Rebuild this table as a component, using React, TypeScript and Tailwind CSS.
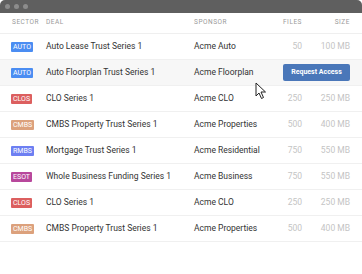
import React from "react";

type Deal = {
  sector: string;
  deal: string;
  sponsor: string;
  files: number;
  size: string;
};

const SECTOR_COLORS: Record<string, string> = {
  AUTO: "bg-[#4b8df2]",
  CLOS: "bg-[#dc5f5f]",
  CMBS: "bg-[#dca17c]",
  RMBS: "bg-[#6d7ff2]",
  ESOT: "bg-[#b8489c]",
};

const DEALS: Deal[] = [
  { sector: "AUTO", deal: "Auto Lease Trust Series 1", sponsor: "Acme Auto", files: 50, size: "100 MB" },
  { sector: "AUTO", deal: "Auto Floorplan Trust Series 1", sponsor: "Acme Floorplan", files: 50, size: "100 MB" },
  { sector: "CLOS", deal: "CLO Series 1", sponsor: "Acme CLO", files: 250, size: "250 MB" },
  { sector: "CMBS", deal: "CMBS Property Trust Series 1", sponsor: "Acme Properties", files: 500, size: "400 MB" },
  { sector: "RMBS", deal: "Mortgage Trust Series 1", sponsor: "Acme Residential", files: 750, size: "550 MB" },
  { sector: "ESOT", deal: "Whole Business Funding Series 1", sponsor: "Acme Business", files: 750, size: "550 MB" },
  { sector: "CLOS", deal: "CLO Series 1", sponsor: "Acme CLO", files: 250, size: "250 MB" },
  { sector: "CMBS", deal: "CMBS Property Trust Series 1", sponsor: "Acme Properties", files: 500, size: "400 MB" },
];

// hovered row shows the action button instead of files/size
const HOVER_ROW = 1;

const ROW = "grid grid-cols-[35px_148px_1fr_40px_48px] items-center pl-[11px] pr-[12px]";

function Cursor() {
  return (
    <svg
      viewBox="0 0 12 18"
      className="absolute left-[255px] top-[82px] h-[18px] w-[12px]"
      aria-hidden
    >
      <path
        d="M1 1 L1 14 L4 11 L6.5 16.5 L8.5 15.5 L6 10 L10.5 10 Z"
        fill="#fff"
        stroke="#222"
        strokeWidth="1"
        strokeLinejoin="round"
      />
    </svg>
  );
}

export default function App() {
  return (
    <div className="relative h-[274px] w-[362px] overflow-hidden bg-white font-['Roboto','Liberation_Sans',sans-serif]">
      {/* window chrome */}
      <div className="flex h-[13px] items-center gap-[4px] rounded-t-[5px] bg-[#5f5f5f] pl-[5px]">
        <span className="h-[5px] w-[5px] rounded-full bg-[#8c8c8c]" />
        <span className="h-[5px] w-[5px] rounded-full bg-[#8c8c8c]" />
        <span className="h-[5px] w-[5px] rounded-full bg-[#8c8c8c]" />
      </div>

      {/* header */}
      <div className={`${ROW} h-[21px] border-b border-[#efefef] text-[6.5px] tracking-[0.08em] text-[#9a9a9a]`}>
        <span className="pl-px">SECTOR</span>
        <span>DEAL</span>
        <span>SPONSOR</span>
        <span className="text-right">FILES</span>
        <span className="text-right">SIZE</span>
      </div>

      {DEALS.map((d, i) => (
        <div
          key={i}
          className={`${ROW} h-[26px] border-b border-[#f0f0f0] text-[8.5px] text-[#333] ${
            i === HOVER_ROW ? "bg-[#f7f7f7]" : ""
          }`}
        >
          <span>
            <span
              className={`inline-block rounded-[1px] px-[2px] text-[7px] leading-[10px] text-white ${SECTOR_COLORS[d.sector]}`}
            >
              {d.sector}
            </span>
          </span>
          <span className="whitespace-nowrap">{d.deal}</span>
          <span className="whitespace-nowrap">{d.sponsor}</span>
          {i === HOVER_ROW ? (
            <span className="col-span-2 flex justify-end">
              <button
                type="button"
                className="flex h-[17px] w-[67px] items-center justify-center rounded-[2px] bg-[#4a77b9] text-[7px] font-bold text-white"
              >
                Request Access
              </button>
            </span>
          ) : (
            <>
              <span className="text-right text-[#c4c4c4]">{d.files}</span>
              <span className="text-right text-[#c4c4c4]">{d.size}</span>
            </>
          )}
        </div>
      ))}

      <Cursor />
    </div>
  );
}
